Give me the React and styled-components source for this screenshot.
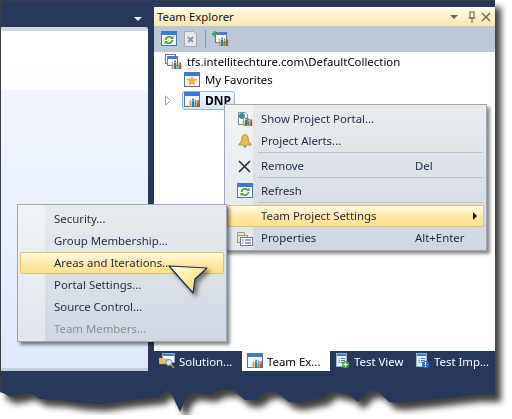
import React from 'react';
import styled, { createGlobalStyle } from 'styled-components';

const GlobalStyle = createGlobalStyle`
  body {
    margin: 0;
    background: #fff;
    font-family: "Noto Sans", "Open Sans", sans-serif;
    font-size: 11.4px;
  }
`;

const tornEdge = [
  [0, 392], [5, 394], [10, 397], [20, 395], [30, 393], [40, 399], [60, 400], [80, 403],
  [100, 404], [130, 400], [160, 397], [167, 390], [172, 395], [180, 412], [186, 398],
  [193, 393], [210, 395], [220, 390], [233, 390], [245, 400], [256, 400], [266, 392],
  [276, 392], [289, 402], [299, 403], [323, 398], [331, 391], [349, 395], [358, 402],
  [369, 391], [379, 392], [389, 402], [399, 403], [429, 400], [456, 397], [473, 395], [495, 395],
];

const tornPath = `polygon(0 0, 495px 0, ${[...tornEdge]
  .reverse()
  .map(([x, y]) => `${x}px ${y}px`)
  .join(', ')})`;

const WindowIcon = ({ children }) => (
  <svg width="16" height="16" viewBox="0 0 16 16" style={{ flex: 'none' }}>
    <rect x="0.5" y="0.5" width="15" height="14" fill="#f4f7fb" stroke="#4f75aa" />
    <rect x="1" y="1" width="14" height="3" fill="#3a7be0" />
    {children}
  </svg>
);

const Bars = ({ x = 0, y = 0 }) => (
  <g transform={`translate(${x} ${y}) scale(0.85)`}>
    <rect x="0" y="4" width="2.4" height="6" fill="#e2a13a" />
    <circle cx="1.2" cy="2.8" r="1.1" fill="#e2a13a" />
    <rect x="3" y="2.5" width="2.4" height="7.5" fill="#2f6fd0" />
    <circle cx="4.2" cy="1.2" r="1.1" fill="#2f6fd0" />
    <rect x="6" y="3.5" width="2.4" height="6.5" fill="#4aa83a" />
    <circle cx="7.2" cy="2.2" r="1.1" fill="#4aa83a" />
    <rect x="9" y="4.5" width="2.4" height="5.5" fill="#d8392e" />
    <circle cx="10.2" cy="3.3" r="1.1" fill="#d8392e" />
  </g>
);

const RefreshIcon = () => (
  <WindowIcon>
    <path d="M4.5 9a3.5 3.5 0 0 1 6-2.200M11.500 9a3.500 3.500 0 0 1-6 2.200" fill="none" stroke="#3f9a1e" strokeWidth="1.6" />
    <path d="M9.200 7.900h3.200V4.700zM6.800 10.100H3.600v3.200z" fill="#3f9a1e" />
  </WindowIcon>
);

const DeleteIcon = () => (
  <svg width="13" height="16" viewBox="0 0 13 16">
    <path d="M.5 .5h9l3 3v12H.5z" fill="#e6e8ea" stroke="#a4abb4" />
    <path d="M4 6l5 5M9 6l-5 5" stroke="#8d949d" strokeWidth="1.8" />
  </svg>
);

const AddProjectIcon = () => (
  <svg width="17" height="16" viewBox="0 0 17 16">
    <rect x="3.500" y="1.500" width="11" height="10" fill="#fff" stroke="#5b7aa8" />
    <rect x="4" y="2" width="10" height="2" fill="#3a7be0" />
    <Bars x="6.500" y="6.500" />
    <path d="M2.500 0v6M0 3h6" stroke="#4aa83a" strokeWidth="2" />
  </svg>
);

const ServerIcon = () => (
  <svg width="17" height="16" viewBox="0 0 17 16">
    <rect x="0.500" y="0.500" width="10" height="9" fill="#fff" stroke="#5b7aa8" />
    <rect x="2.500" y="2.500" width="10" height="9" fill="#fff" stroke="#5b7aa8" />
    <rect x="3" y="3" width="9" height="2" fill="#3a7be0" />
    <Bars x="6.500" y="6.500" />
  </svg>
);

const FavoriteIcon = () => (
  <WindowIcon>
    <rect x="1" y="4" width="14" height="10" fill="#f1efe4" />
    <path d="M8 4.500l1.200 3h3.300l-2.600 2.100.9 3.400L8 11 5.200 13l.9-3.400-2.600-2.100h3.300z" fill="#f0b23a" stroke="#c99638" strokeWidth=".5" />
  </WindowIcon>
);

const ProjectIcon = () => (
  <WindowIcon>
    <Bars x="5.500" y="6.500" />
  </WindowIcon>
);

const PortalIcon = () => (
  <svg width="16" height="16" viewBox="0 0 16 16">
    <path d="M1.500 1.500h7l2 2v10h-9z" fill="#fff" stroke="#7d8ba0" />
    <circle cx="5" cy="5" r="3" fill="#3a8f8a" />
    <Bars x="5.500" y="6.500" />
  </svg>
);

const BellIcon = () => (
  <svg width="14" height="14" viewBox="0 0 13 13">
    <path d="M6.500 .8c-2.400 0-3 1.700-3 3.800 0 2.300-1 3.600-2.600 4.700v1h11.200v-1C10.500 8.200 9.500 6.900 9.500 4.600c0-2.100-.6-3.800-3-3.800z" fill="#e9bd4f" stroke="#ad8a34" strokeWidth=".8" />
    <path d="M4.800 11.200h3.400L6.500 12.800z" fill="#8a6c25" />
  </svg>
);

const RemoveIcon = () => (
  <svg width="13" height="13" viewBox="0 0 13 13">
    <path d="M1 1l11 11M12 1L1 12" stroke="#2b3138" strokeWidth="1.700" />
  </svg>
);

const PropertiesIcon = () => (
  <svg width="16" height="15" viewBox="0 0 16 15">
    <path d="M.5 1.500h7v3h-7z" fill="#efe3bd" stroke="#9a9a8c" />
    <rect x="0.500" y="4.500" width="10" height="7" fill="#efe3bd" stroke="#9a9a8c" />
    <rect x="3.500" y="6.500" width="12" height="8" fill="#fff" stroke="#6f7c90" />
    <path d="M5 9h1.500M8 9h6M5 12h1.500M8 12h6" stroke="#35507a" />
  </svg>
);

const SolutionIcon = () => (
  <svg width="16" height="16" viewBox="0 0 16 16" style={{ flex: 'none' }}>
    <rect x="3.500" y="0.500" width="12" height="9" fill="#fff" stroke="#8ea6c8" />
    <rect x="4" y="1" width="11" height="2" fill="#3a7be0" />
    <path d="M0 5h4l1 1h5v5H0z" fill="#e8c35c" stroke="#a68a3c" strokeWidth=".5" />
    <circle cx="10" cy="9.500" r="3" fill="#d4e8f6" stroke="#7b8fa3" />
    <path d="M12 11.500l3 3.500" stroke="#c89a3a" strokeWidth="1.600" />
  </svg>
);

const TestDocIcon = ({ badge, mark }) => (
  <svg width="14" height="16" viewBox="0 0 14 16" style={{ flex: 'none' }}>
    <rect x="0.500" y="0.500" width="10" height="13" fill="#e9eff8" stroke="#9db3d2" />
    <rect x="1" y="1" width="9" height="2" fill="#3a7be0" />
    <path d="M2.500 5.500h1M5 5.500h4M2.500 7.500h1M5 7.500h4M2.500 9.500h1M5 9.500h4" stroke="#5b7396" />
    <circle cx="9.500" cy="11.500" r="3.500" fill={badge} />
    <path d={mark} stroke="#fff" strokeWidth="1.200" />
  </svg>
);

const Frame = styled.div`
  width: 495px;
  filter: drop-shadow(6px 7px 3px rgba(0, 0, 0, 0.75));
`;

const Window = styled.div`
  box-sizing: border-box;
  height: 415px;
  display: grid;
  grid-template-columns: 147px 1fr;
  grid-template-rows: 364px;
  column-gap: 6px;
  padding-top: 6px;
  border-top: 1px solid #3a3d42;
  border-left: 1px solid #3a3d42;
  background-color: #28385a;
  background-image: radial-gradient(circle at 1px 1px, #2e3f5e 0.6px, transparent 0.7px);
  background-size: 3px 3px;
  clip-path: ${tornPath};
`;

const DocPanel = styled.section`
  margin-top: 20px;
  display: flex;
  flex-direction: column;
  border-top-right-radius: 2px;
  border-bottom: 3px solid #c4cddb;
  border-top: 4px solid #ced7e4;
  background: linear-gradient(#f6f9ff, #dfe9fb);
`;

const DocTop = styled.div`
  height: 59px;
  background: linear-gradient(#fff, #fdfeff);
`;

const DropArrow = styled.i`
  position: absolute;
  top: 17px;
  left: 134px;
  border: 4px solid transparent;
  border-top: 4px solid #eef2f7;
`;

const ToolPanel = styled.section`
  display: flex;
  flex-direction: column;
`;

const TitleBar = styled.header`
  height: 19px;
  padding: 0 3px;
  box-sizing: border-box;
  display: flex;
  align-items: center;
  gap: 6px;
  background: linear-gradient(#fffcf0, #fbe7a8);
  color: #111;
`;

const TitleText = styled.span`
  flex: 1;
`;

const Toolbar = styled.div`
  height: 26px;
  padding-left: 7px;
  display: flex;
  align-items: center;
  gap: 7px;
  background: #bcc7d8;
`;

const ToolSep = styled.i`
  width: 1px;
  height: 18px;
  margin-left: 1px;
  margin-right: -1px;
  background: #8d99ab;
`;

const TreeBody = styled.div`
  flex: 1;
  background: #fff;
  padding-top: 1px;
  color: #000;
`;

const TreeRow = styled.div`
  height: 18px;
  margin-top: ${(p) => p.$gap || 0}px;
  display: flex;
  align-items: center;
  gap: 5px;
  padding-left: ${(p) => p.$indent}px;
`;

const TreeLabel = styled.span`
  position: relative;
  top: -1px;
`;

const Twisty = () => (
  <svg width="6" height="11" viewBox="0 0 6 11" style={{ marginRight: 6 }}>
    <path d="M.5 .8l5 4.700-5 4.700z" fill="#fff" stroke="#a6a6a6" />
  </svg>
);

const SelectedNode = styled.div`
  height: 17px;
  padding: 0 3px 0 1px;
  display: flex;
  align-items: center;
  gap: 5px;
  font-weight: 700;
  font-size: 12px;
  border: 1px solid #8fb5e2;
  border-radius: 3px;
  background: linear-gradient(#f4f9ff, #d3e5fb);
`;

const TabStrip = styled.nav`
  height: 20px;
  display: flex;
  align-items: stretch;
`;

const Tab = styled.div`
  width: ${(p) => p.$width}px;
  box-sizing: border-box;
  padding-left: ${(p) => p.$inset}px;
  display: flex;
  align-items: center;
  gap: 4px;
  white-space: nowrap;
  color: ${(p) => (p.$active ? '#000' : '#fff')};
  background: ${(p) => (p.$active ? '#fff' : 'transparent')};
`;

const Menu = styled.div`
  position: absolute;
  left: ${(p) => p.$left}px;
  top: ${(p) => p.$top}px;
  width: ${(p) => p.$width}px;
  box-sizing: border-box;
  padding: 3px 0 1px;
  border: 1px solid #9ba7b7;
  color: #1c2a42;
  background: linear-gradient(#e9ecee, #d0d7e2);
  box-shadow: 3px 3px 3px rgba(0, 0, 0, 0.45);
  &::before {
    content: '';
    position: absolute;
    inset: 0 auto 0 0;
    width: ${(p) => p.$gutter}px;
    background: rgba(255, 255, 255, 0.38);
  }
`;

const Item = styled.div`
  position: relative;
  height: 22px;
  box-sizing: border-box;
  display: flex;
  align-items: center;
  margin: 0 2px;
  border: 1px solid ${(p) => (p.$hot ? '#e5c365' : 'transparent')};
  border-radius: 2px;
  color: ${(p) => (p.$disabled ? '#8d8f94' : 'inherit')};
  background: ${(p) => (p.$hot ? 'linear-gradient(#fffbe8, #ffe9a8 50%, #ffe08f)' : 'none')};
`;

const ItemIcon = styled.span`
  width: 33px;
  flex: none;
  display: flex;
  justify-content: center;
  align-items: center;
`;

const ItemLabel = styled.span`
  flex: 1;
  margin-top: -2px;
`;

const Shortcut = styled.span`
  width: 68px;
  margin-top: -2px;
`;

const Submenu = styled.i`
  position: absolute;
  right: 6px;
  top: 6px;
  border: 4px solid transparent;
  border-left: 4px solid #111;
  border-right: 0;
`;

const Separator = styled.div`
  position: relative;
  height: 3px;
  margin-left: 33px;
  margin-right: 3px;
  &::after {
    content: '';
    display: block;
    height: 1px;
    background: #b9c3d1;
  }
`;

const Pointer = styled.svg`
  position: absolute;
  left: 164px;
  top: 262px;
  filter: drop-shadow(3px 3px 2px rgba(0, 0, 0, 0.5));
`;

export default function App() {
  return (
    <>
      <GlobalStyle />
      <Frame>
        <Window>
          <DropArrow />
          <DocPanel>
            <DocTop />
          </DocPanel>
          <ToolPanel>
            <TitleBar>
              <TitleText>Team Explorer</TitleText>
              <svg width="42" height="12" viewBox="0 0 42 12">
                <path d="M0 4h8l-4 4z" fill="#6b6654" />
                <path d="M19 1h6M20 1v6h4V1M18.500 7h7M22 7v5" fill="none" stroke="#6b6654" />
                <path d="M32 2l8 8M40 2l-8 8" stroke="#6b6654" strokeWidth="1.400" />
              </svg>
            </TitleBar>
            <Toolbar>
              <RefreshIcon />
              <DeleteIcon />
              <ToolSep />
              <AddProjectIcon />
            </Toolbar>
            <TreeBody>
              <TreeRow $indent={11}><ServerIcon /><TreeLabel>tfs.intellitechture.com\DefaultCollection</TreeLabel></TreeRow>
              <TreeRow $indent={30}><FavoriteIcon /><TreeLabel>My Favorites</TreeLabel></TreeRow>
              <TreeRow $indent={11} $gap={2}>
                <Twisty />
                <SelectedNode><ProjectIcon />DNP</SelectedNode>
              </TreeRow>
            </TreeBody>
            <TabStrip>
              <Tab $width={88} $inset={5}><SolutionIcon />Solution...</Tab>
              <Tab $width={88} $inset={5} $active><ProjectIcon />Team Ex...</Tab>
              <Tab $width={80} $inset={6}>
                <TestDocIcon badge="#4aa83a" mark="M7.500 11.500h4M9.500 9.500v4" />
                Test View
              </Tab>
              <Tab $width={80} $inset={6}>
                <TestDocIcon badge="#2f6fd0" mark="M9.500 9v3.200M9.500 13v1" />
                Test Imp...
              </Tab>
            </TabStrip>
          </ToolPanel>
        </Window>
      </Frame>

      <Menu $left={224} $top={104} $width={263} $gutter={28}>
        <Item><ItemIcon><PortalIcon /></ItemIcon><ItemLabel>Show Project Portal...</ItemLabel></Item>
        <Item><ItemIcon><BellIcon /></ItemIcon><ItemLabel>Project Alerts...</ItemLabel></Item>
        <Separator />
        <Item><ItemIcon><RemoveIcon /></ItemIcon><ItemLabel>Remove</ItemLabel><Shortcut>Del</Shortcut></Item>
        <Separator />
        <Item><ItemIcon><RefreshIcon /></ItemIcon><ItemLabel>Refresh</ItemLabel></Item>
        <Separator />
        <Item $hot><ItemIcon /><ItemLabel>Team Project Settings</ItemLabel><Submenu /></Item>
        <Item><ItemIcon><PropertiesIcon /></ItemIcon><ItemLabel>Properties</ItemLabel><Shortcut>Alt+Enter</Shortcut></Item>
      </Menu>

      <Menu $left={17} $top={204} $width={210} $gutter={27}>
        <Item><ItemIcon /><ItemLabel>Security...</ItemLabel></Item>
        <Item><ItemIcon /><ItemLabel>Group Membership...</ItemLabel></Item>
        <Item $hot><ItemIcon /><ItemLabel>Areas and Iterations...</ItemLabel></Item>
        <Item><ItemIcon /><ItemLabel>Portal Settings...</ItemLabel></Item>
        <Item><ItemIcon /><ItemLabel>Source Control...</ItemLabel></Item>
        <Item $disabled><ItemIcon /><ItemLabel>Team Members...</ItemLabel></Item>
      </Menu>

      <Pointer width="46" height="36" viewBox="0 0 46 36">
        <defs>
          <linearGradient id="pointerFill" x1="0" y1="0" x2="1" y2="1">
            <stop offset="0" stopColor="#fffef2" />
            <stop offset="1" stopColor="#f7d94e" />
          </linearGradient>
        </defs>
        <path d="M5 4l38 2-12 11-2 14z" fill="url(#pointerFill)" stroke="#1d2a52" strokeWidth="1.200" strokeLinejoin="round" />
      </Pointer>
    </>
  );
}
